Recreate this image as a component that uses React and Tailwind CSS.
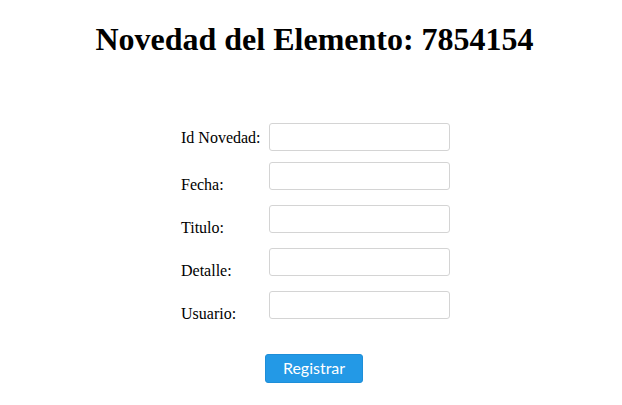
export default function App() {
  const rows = [
    { label: "Id Novedad:", first: true },
    { label: "Fecha:" },
    { label: "Titulo:" },
    { label: "Detalle:" },
    { label: "Usuario:" },
  ];
  return (
    <div className="w-[622px] h-[405px] bg-white text-black" style={{ fontFamily: '"Liberation Serif", "Times New Roman", serif' }}>
      <h1 className="text-center text-[32px] font-bold leading-[35.4px] pt-[22px] pl-[7px] m-0">
        Novedad del Elemento: 7854154
      </h1>
      <div className="ml-[181px] mt-[65.5px] w-[269px]">
        {rows.map((r, i) => (
          <div key={i} className={`flex items-start ${r.first ? "h-[39px]" : "h-[43px]"}`}>
            <div className={`w-[88px] text-[16px] leading-[18px] ${r.first ? "pt-[5.6px]" : "pt-[13.6px]"}`}>
              {r.label}
            </div>
            <input
              type="text"
              className="w-[181px] h-[28px] border border-[#d4d4d4] rounded-[3px] bg-white outline-none"
            />
          </div>
        ))}
        <div className="flex justify-center mt-[20px] pr-[3px]">
          <button
            className="w-[98px] h-[29px] rounded-[3px] bg-[#2399e6] border border-[#1e8ed8] text-white text-[16px] leading-none"
            style={{ fontFamily: 'Lato, "Noto Sans", sans-serif' }}
          >
            Registrar
          </button>
        </div>
      </div>
    </div>
  );
}
